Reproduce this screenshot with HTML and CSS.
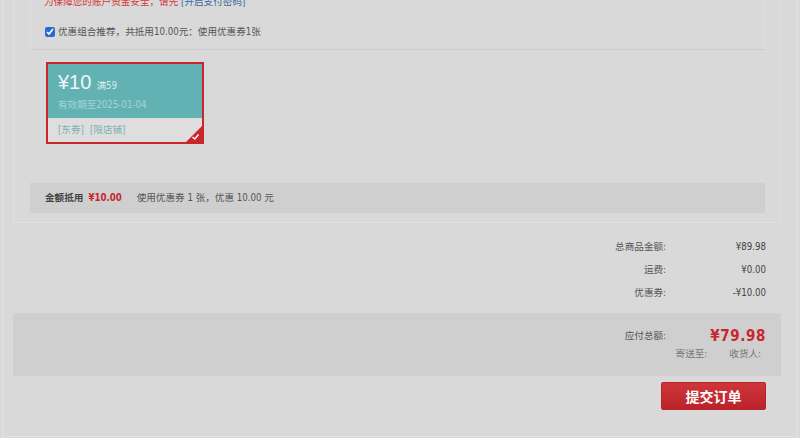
FILE: index.html
```html
<!DOCTYPE html>
<html lang="zh-CN">
<head>
<meta charset="utf-8">
<title>订单结算</title>
<link rel="stylesheet" href="styles.css">
</head>
<body>
<div class="page">
  <div class="coupon-box">
    <div class="coupon-head">
      <p class="tip"><span class="warn">为保障您的账户资金安全，请先</span> <a class="link">[开启支付密码]</a></p>
      <label class="combo"><input type="checkbox" class="combo-check" checked>优惠组合推荐，共抵用10.00元：使用优惠券1张</label>
    </div>
    <div class="coupon-list">
      <div class="coupon">
        <div class="coupon-top">
          <div class="amount"><span class="yen">¥10</span><span class="limit">满59</span></div>
          <div class="expire">有效期至2025-01-04</div>
        </div>
        <div class="coupon-bottom"><span class="tag">[东券]</span><span class="tag">[限店铺]</span></div>
        <span class="corner">
          <svg width="16" height="16" viewBox="0 0 16 16"><path d="M16 0 L16 16 L0 16 Z" fill="#c9262d"/><path d="M6.5 11 L8.8 13 L12.5 8.5" fill="none" stroke="#fff" stroke-width="1.4"/></svg>
        </span>
      </div>
    </div>
    <div class="coupon-sum">
      <span class="sum-label">金额抵用</span><span class="sum-price">¥10.00</span><span class="sum-info">使用优惠券 1 张，优惠 10.00 元</span>
    </div>
  </div>

  <div class="prices">
    <div class="price-row"><span class="price-label">总商品金额:</span><span class="price-value">¥89.98</span></div>
    <div class="price-row"><span class="price-label">运费:</span><span class="price-value">¥0.00</span></div>
    <div class="price-row"><span class="price-label">优惠券:</span><span class="price-value">-¥10.00</span></div>
  </div>

  <div class="total">
    <div class="total-row"><span class="price-label">应付总额:</span><span class="total-value">¥79.98</span></div>
    <div class="ship-row"><span class="ship">寄送至:</span><span class="ship receiver">收货人:</span></div>
  </div>

  <div class="actions">
    <button class="submit" type="button">提交订单</button>
  </div>
</div>
</body>
</html>
```

FILE: styles.css
```css
html, body {
  margin: 0;
  padding: 0;
}

body {
  background: #d9d9d9;
  font-family: "DejaVu Sans Condensed", "DejaVu Sans", "Noto Sans CJK SC", sans-serif;
  font-size: 9.6px;
  line-height: 16px;
  color: #555;
  overflow: hidden;
  height: 438px;
}

.page {
  box-sizing: border-box;
  width: 796px;
  margin: -19px 0 0 2px;
  border: 1px solid #e2e2e2;
  border-top: 0;
  padding: 0 16px 0 10px;
}

.coupon-box {
  border: 1px solid #e0e0e0;
  padding: 0 15px 9px 16px;
}

.coupon-head {
  border: 1px solid #e0e0e0;
  border-top: 0;
  border-bottom-color: #cbcbcb;
  padding: 12px 13px 9px;
}

.tip {
  margin: 0;
  line-height: 16px;
}

.warn {
  color: #d33a3a;
}

.link {
  color: #3a68a8;
}

.combo {
  display: flex;
  align-items: center;
  margin-top: 14px;
  line-height: 16px;
  color: #555;
}

.combo-check {
  width: 10px;
  height: 10px;
  margin: 0 3px 0 1px;
  accent-color: #2a6ad0;
}

.coupon-list {
  padding: 12px 16px 39px;
}

.coupon {
  position: relative;
  box-sizing: border-box;
  width: 158px;
  height: 82px;
  border: 2px solid #c7262c;
  display: flex;
  flex-direction: column;
}

.coupon-top {
  height: 54px;
  box-sizing: border-box;
  padding: 6px 10px 0;
  background: #63b2b3;
}

.amount {
  display: flex;
  align-items: baseline;
  line-height: 24px;
}

.yen {
  font-family: "Liberation Sans", "DejaVu Sans", sans-serif;
  font-size: 20px;
  color: #eef6f6;
}

.limit {
  margin-left: 5px;
  font-size: 9.6px;
  color: #d6ecec;
}

.expire {
  line-height: 14px;
  font-size: 9.6px;
  color: #a4d4d4;
}

.coupon-bottom {
  flex: 1;
  display: flex;
  padding-left: 10px;
  line-height: 24px;
  background: #dedede;
  color: #7db1b3;
}

.tag + .tag {
  margin-left: 6px;
}

.corner {
  position: absolute;
  right: 0;
  bottom: 0;
  width: 16px;
  height: 16px;
  display: block;
}

.corner svg {
  display: block;
}

.coupon-sum {
  height: 30px;
  line-height: 30px;
  padding-left: 15px;
  background: #cfcfcf;
  display: flex;
}

.sum-label {
  font-weight: bold;
  color: #444;
}

.sum-price {
  margin-left: 5px;
  font-weight: bold;
  color: #c9272e;
}

.sum-info {
  margin-left: 15px;
  color: #555;
}

.prices {
  margin-top: 12px;
  padding-right: 15px;
}

.price-row,
.total-row {
  display: flex;
  justify-content: flex-end;
  line-height: 23px;
}

.price-label {
  text-align: right;
  color: #555;
}

.price-value {
  width: 100px;
  text-align: right;
  color: #444;
}

.total {
  margin-top: 9px;
  padding: 13px 15px 14px;
  background: #cfcfcf;
}

.total-row {
  line-height: 20px;
  align-items: center;
}

.total-value {
  width: 100px;
  text-align: right;
  font-size: 15px;
  letter-spacing: 0.6px;
  font-weight: bold;
  color: #c9272e;
}

.ship-row {
  display: flex;
  justify-content: flex-end;
  line-height: 16px;
  padding-right: 5px;
  color: #777;
}

.receiver {
  margin-left: 22px;
}

.actions {
  display: flex;
  justify-content: flex-end;
  padding: 6px 15px 26px;
}

.submit {
  width: 105px;
  height: 28px;
  border: 1px solid #b82228;
  border-radius: 2px;
  background: linear-gradient(#ce363c, #ba2329);
  color: #fff;
  font-family: "Noto Sans CJK SC", sans-serif;
  font-size: 14px;
  font-weight: bold;
  padding: 0;
  cursor: pointer;
}
```
